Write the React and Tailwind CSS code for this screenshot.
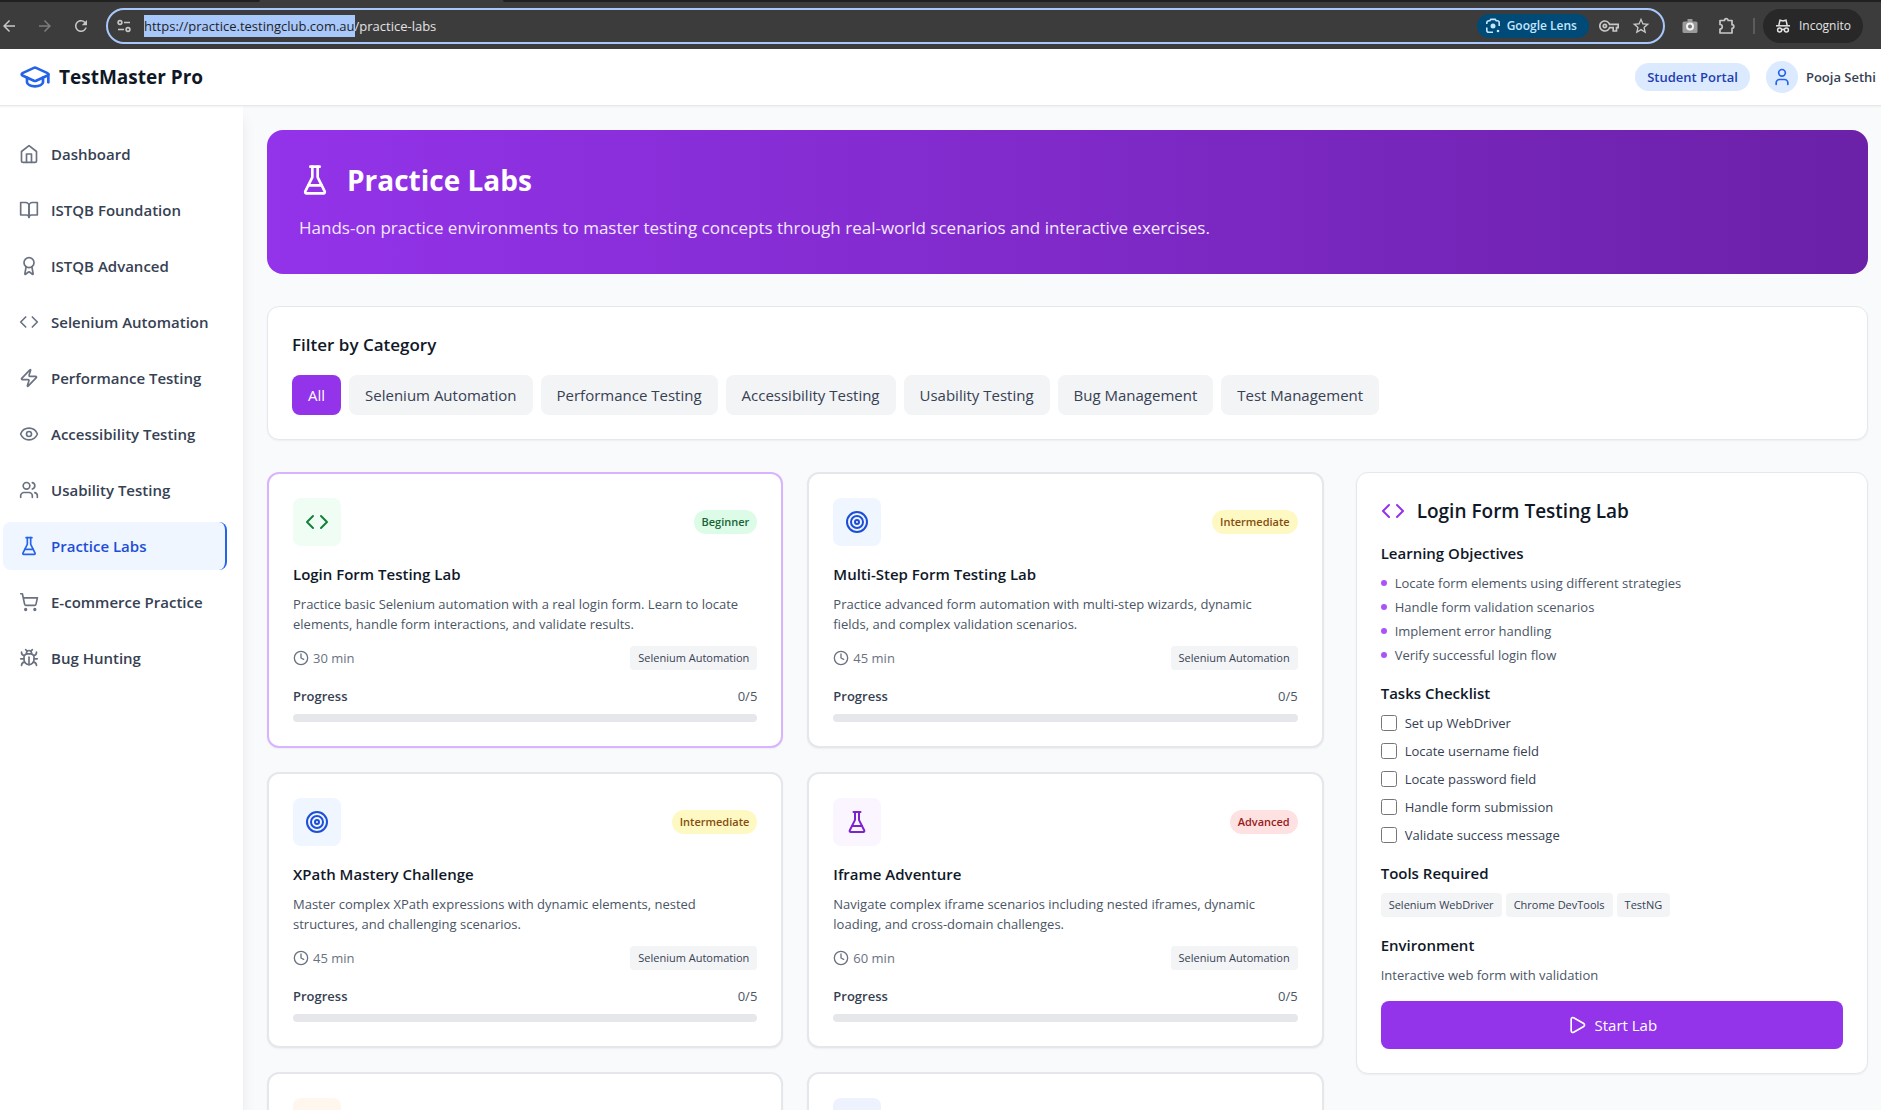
import React, { useEffect, useRef } from "react";
import {
  GraduationCap, User, Code, Zap, Eye, Users, ShoppingCart, Bug, Target, Clock, Play, Award,
} from "lucide-react";
import { MdArrowBack, MdArrowForward, MdRefresh, MdStarBorder, MdOutlineVpnKey } from "react-icons/md";

function Stroke({ className, children }) {
  return (
    <svg className={className} viewBox="0 0 24 24" fill="none" stroke="currentColor" strokeWidth="2" strokeLinecap="round" strokeLinejoin="round" aria-hidden="true">
      {children}
    </svg>
  );
}

function Flask({ className }) {
  return (
    <Stroke className={className}>
      <path d="M10 2v7.527a2 2 0 0 1-.211.896L4.72 20.55a1 1 0 0 0 .9 1.45h12.76a1 1 0 0 0 .9-1.45l-5.069-10.127A2 2 0 0 1 14 9.527V2" />
      <path d="M8.5 2h7" />
      <path d="M7 16h10" />
    </Stroke>
  );
}

function Book({ className }) {
  return (
    <Stroke className={className}>
      <path d="M2 3h6a4 4 0 0 1 4 4v14a3 3 0 0 0-3-3H2z" />
      <path d="M22 3h-6a4 4 0 0 0-4 4v14a3 3 0 0 1 3-3h7z" />
    </Stroke>
  );
}

function HomeIcon({ className }) {
  return (
    <Stroke className={className}>
      <path d="m3 9 9-7 9 7v11a2 2 0 0 1-2 2H5a2 2 0 0 1-2-2z" />
      <path d="M9 22V12h6v10" />
    </Stroke>
  );
}

function Tune() {
  return (
    <svg className="size-4 shrink-0" viewBox="0 0 16 16" fill="none" stroke="currentColor" strokeWidth="1.6" aria-hidden="true">
      <circle cx="4" cy="4.5" r="1.9" />
      <path d="M8 4.5h6M2 11.5h6" />
      <circle cx="12" cy="11.5" r="1.9" />
    </svg>
  );
}

function Lens() {
  return (
    <svg className="size-4 shrink-0" viewBox="0 0 16 16" fill="none" stroke="currentColor" strokeWidth="1.6" aria-hidden="true">
      <path d="M1.8 6V4.8a2 2 0 0 1 2-2h1l1-1.4h4.4l1 1.4h1a2 2 0 0 1 2 2V8M1.8 9.5v2.7a2 2 0 0 0 2 2H8" />
      <circle cx="8" cy="8" r="2.5" fill="currentColor" stroke="none" />
      <circle cx="13" cy="13" r="1.3" fill="currentColor" stroke="none" />
    </svg>
  );
}

function Spy() {
  return (
    <svg className="size-4 shrink-0" viewBox="0 0 16 16" fill="none" stroke="currentColor" strokeWidth="1.5" aria-hidden="true">
      <path d="M1 7.8h14" />
      <path d="M3.8 7.5 5 2.2l3 .8 3-.8 1.2 5.3" />
      <circle cx="4.6" cy="12" r="2" />
      <circle cx="11.4" cy="12" r="2" />
      <path d="M6.6 11.8c.8-.6 2-.6 2.8 0" />
    </svg>
  );
}

function Camera() {
  return (
    <svg className="size-[18px]" viewBox="0 0 18 18" aria-hidden="true">
      <path d="M6.5 2h5v2.5H15A1.5 1.5 0 0 1 16.5 6v8.500A1.5 1.5 0 0 1 15 16H3a1.5 1.5 0 0 1-1.5-1.5V6A1.5 1.5 0 0 1 3 4.5h3.5z" fill="#9a9a9a" />
      <circle cx="9" cy="9.5" r="3" fill="#777" stroke="#f3f3f3" strokeWidth="2" />
    </svg>
  );
}

function Puzzle() {
  return (
    <svg className="size-5" viewBox="0 0 20 20" fill="none" stroke="currentColor" strokeWidth="1.7" strokeLinejoin="round" aria-hidden="true">
      <path d="M3 4.5h4.500a1.8 1.8 0 0 1 3.6 0H15v4.200a1.8 1.8 0 0 1 0 3.6V17H3v-4a2.2 2.2 0 0 0 0-4.500z" />
    </svg>
  );
}

function BrowserBar() {
  const url = useRef(null);
  useEffect(() => {
    url.current.focus();
    url.current.setSelectionRange(0, "https://practice.testingclub.com.au".length);
  }, []);
  return (
    <div className="shrink-0 bg-[#3c3c3c] text-[#c7c7c7]">
      <div className="flex h-[2px]">
        <div className="w-[260px] rounded-br-sm bg-[#202020]" />
        <div className="w-[243px]" />
        <div className="flex-1 rounded-bl-sm bg-[#202020]" />
      </div>
      <div className="flex h-[47px] items-center pr-[18px]">
        <button aria-label="Back" className="w-[18px]"><MdArrowBack className="size-[18px]" /></button>
        <button aria-label="Forward" className="ml-[18px] w-[18px] text-[#7c7c7c]"><MdArrowForward className="size-[18px]" /></button>
        <button aria-label="Reload" className="ml-[18px] w-[18px]"><MdRefresh className="size-[18px]" /></button>
        <div className="ml-4 flex h-9 flex-1 items-center rounded-full border-2 border-[#a8c7fa] pr-3 pl-2">
          <Tune />
          <input
            ref={url}
            aria-label="Address"
            defaultValue="https://practice.testingclub.com.au/practice-labs"
            className="ml-3 h-[22px] min-w-0 flex-1 bg-transparent text-[13px] leading-[22px] text-[#e3e3e3] outline-none selection:bg-[#a8c7fa] selection:text-[#1f1f1f]"
          />
          <button className="flex h-6 items-center gap-[6px] rounded-full bg-[#004a77] pr-3 pl-2 text-[12px] font-semibold text-[#c2e7ff]">
            <Lens />Google Lens
          </button>
          <button aria-label="Passwords" className="ml-[10px]"><MdOutlineVpnKey className="size-5" /></button>
          <button aria-label="Bookmark" className="ml-3"><MdStarBorder className="size-5" /></button>
        </div>
        <button aria-label="Camera" className="ml-4"><Camera /></button>
        <button aria-label="Extensions" className="ml-[18px]"><Puzzle /></button>
        <div className="ml-4 h-4 w-[2px] bg-[#5c5c5c]" />
        <button className="ml-2 flex h-[34px] items-center gap-2 rounded-full bg-[#282828] px-3 text-[12px] text-[#e3e3e3]">
          <Spy />Incognito
        </button>
      </div>
    </div>
  );
}

const nav = [
  [HomeIcon, "Dashboard"],
  [Book, "ISTQB Foundation"],
  [Award, "ISTQB Advanced"],
  [Code, "Selenium Automation"],
  [Zap, "Performance Testing"],
  [Eye, "Accessibility Testing"],
  [Users, "Usability Testing"],
  [Flask, "Practice Labs"],
  [ShoppingCart, "E-commerce Practice"],
  [Bug, "Bug Hunting"],
];

const filters = ["All", "Selenium Automation", "Performance Testing", "Accessibility Testing", "Usability Testing", "Bug Management", "Test Management"];

const levels = {
  Beginner: "bg-[#dcfce7] text-[#166534]",
  Intermediate: "bg-[#fef9c3] text-[#854d0e]",
  Advanced: "bg-[#fee2e2] text-[#991b1b]",
};

const labs = [
  { icon: Code, tone: "bg-[#f0fdf4] text-[#15803d]", level: "Beginner", title: "Login Form Testing Lab", text: "Practice basic Selenium automation with a real login form. Learn to locate elements, handle form interactions, and validate results.", time: "30 min", selected: true },
  { icon: Target, tone: "bg-[#eff6ff] text-[#1d4ed8]", level: "Intermediate", title: "Multi-Step Form Testing Lab", text: "Practice advanced form automation with multi-step wizards, dynamic fields, and complex validation scenarios.", time: "45 min" },
  { icon: Target, tone: "bg-[#eff6ff] text-[#1d4ed8]", level: "Intermediate", title: "XPath Mastery Challenge", text: "Master complex XPath expressions with dynamic elements, nested structures, and challenging scenarios.", time: "45 min" },
  { icon: Flask, tone: "bg-[#faf5ff] text-[#7e22ce]", level: "Advanced", title: "Iframe Adventure", text: "Navigate complex iframe scenarios including nested iframes, dynamic loading, and cross-domain challenges.", time: "60 min" },
];

function LabCard({ lab }) {
  const Icon = lab.icon;
  return (
    <article className={`rounded-xl border-2 bg-white p-6 shadow-xs ${lab.selected ? "border-[#d8b4fe]" : "border-gray-200"}`}>
      <div className="mb-4 flex items-center justify-between">
        <div className={`rounded-lg p-3 ${lab.tone}`}><Icon className="size-6" /></div>
        <span className={`rounded-full px-2 py-1 text-[11px] leading-4 font-semibold ${levels[lab.level]}`}>{lab.level}</span>
      </div>
      <h3 className="mb-2 text-[15px] leading-6 font-semibold text-gray-900">{lab.title}</h3>
      <p className="mb-3 pr-3 text-[13px] leading-5 text-gray-600">{lab.text}</p>
      <div className="mb-4 flex items-center justify-between">
        <span className="flex items-center gap-1 text-[13px] leading-5 text-gray-500"><Clock className="size-4" />{lab.time}</span>
        <span className="rounded bg-gray-100 px-2 py-1 text-[11px] leading-4 text-gray-700">Selenium Automation</span>
      </div>
      <div className="mb-2 flex justify-between text-[13px] leading-5">
        <span className="font-semibold text-gray-700">Progress</span>
        <span className="text-gray-600">0/5</span>
      </div>
      <div className="h-2 rounded-full bg-gray-200" />
    </article>
  );
}

function Section({ title, children }) {
  return (
    <section className="mt-4">
      <h4 className="mb-2 text-[15px] leading-6 font-semibold text-gray-900">{title}</h4>
      {children}
    </section>
  );
}

const objectives = ["Locate form elements using different strategies", "Handle form validation scenarios", "Implement error handling", "Verify successful login flow"];
const tasks = ["Set up WebDriver", "Locate username field", "Locate password field", "Handle form submission", "Validate success message"];
const tools = ["Selenium WebDriver", "Chrome DevTools", "TestNG"];

export default function App() {
  return (
    <div className="flex h-screen flex-col overflow-hidden bg-gray-50 font-['Open_Sans','Noto_Sans',sans-serif]">
      <BrowserBar />
      <header className="z-10 flex h-[57px] shrink-0 items-center justify-between border-b border-gray-200 bg-white pr-[5px] pl-[19px] shadow-xs">
        <div className="flex items-center gap-2">
          <GraduationCap className="size-8 text-[#2563eb]" />
          <span className="text-[19px] leading-7 font-bold text-gray-900">TestMaster Pro</span>
        </div>
        <div className="flex items-center gap-4">
          <span className="rounded-full bg-[#dbeafe] px-3 py-1 text-[13px] leading-5 font-semibold text-[#1e40af]">Student Portal</span>
          <div className="flex items-center gap-2">
            <div className="flex size-8 items-center justify-center rounded-full bg-[#dbeafe]"><User className="size-5 text-[#2563eb]" /></div>
            <span className="text-[13px] leading-5 font-semibold text-gray-700">Pooja Sethi</span>
          </div>
        </div>
      </header>
      <div className="flex min-h-0 flex-1">
        <nav className="flex w-[243px] shrink-0 flex-col gap-2 bg-white pt-6 pr-4 pl-[3px] shadow-lg">
          {nav.map(([Icon, label]) => (
            <a key={label} href="#" className={`flex items-center gap-3 rounded-lg px-4 py-3 text-[15px] leading-6 font-semibold ${label === "Practice Labs" ? "border-r-2 border-[#2563eb] bg-[#eff6ff] text-[#1d4ed8]" : "text-gray-700"}`}>
              <Icon className={`size-5 ${label === "Practice Labs" ? "text-[#2563eb]" : "text-gray-500"}`} />
              {label}
            </a>
          ))}
        </nav>
        <main className="min-w-0 flex-1 overflow-hidden pt-6 pr-[13px] pl-6">
          <div className="mb-8 rounded-2xl bg-linear-to-r/srgb from-[#9333ea] to-[#6b21a8] p-8">
            <div className="mb-4 flex items-center gap-4 text-white">
              <Flask className="size-8" />
              <h1 className="text-[28px] leading-9 font-bold">Practice Labs</h1>
            </div>
            <p className="text-[17px] leading-7 text-[#f3e8ff]">Hands-on practice environments to master testing concepts through real-world scenarios and interactive exercises.</p>
          </div>
          <div className="mb-8 rounded-xl border border-gray-200 bg-white p-6 shadow-xs">
            <h2 className="mb-4 text-[17px] leading-7 font-semibold text-gray-900">Filter by Category</h2>
            <div className="flex flex-wrap gap-2">
              {filters.map((f) => (
                <button key={f} className={`rounded-lg px-4 py-2 text-[15px] leading-6 ${f === "All" ? "bg-[#9333ea] text-white" : "bg-gray-100 text-gray-700"}`}>{f}</button>
              ))}
            </div>
          </div>
          <div className="grid grid-cols-3 items-start gap-8">
            <div className="col-span-2 grid grid-cols-2 gap-6">
              {labs.map((lab) => <LabCard key={lab.title} lab={lab} />)}
              {["bg-[#fff7ed]", "bg-[#eef2ff]"].map((tone) => (
                <div key={tone} className="h-[276px] rounded-xl border-2 border-gray-200 bg-white p-6 shadow-xs">
                  <div className={`size-12 rounded-lg ${tone}`} />
                </div>
              ))}
            </div>
            <aside className="rounded-xl border border-gray-200 bg-white p-6 shadow-xs">
              <div className="flex items-center gap-3">
                <Code className="size-6 text-[#9333ea]" />
                <h3 className="text-[19px] leading-7 font-semibold text-gray-900">Login Form Testing Lab</h3>
              </div>
              <Section title="Learning Objectives">
                <ul className="flex flex-col gap-1">
                  {objectives.map((o) => (
                    <li key={o} className="flex items-center gap-2 text-[13px] leading-5 text-gray-600"><span className="size-[6px] rounded-full bg-[#a855f7]" />{o}</li>
                  ))}
                </ul>
              </Section>
              <Section title="Tasks Checklist">
                <div className="flex flex-col gap-2">
                  {tasks.map((t) => (
                    <label key={t} className="flex items-center gap-2 text-[13px] leading-5 text-gray-700"><input type="checkbox" className="size-4" />{t}</label>
                  ))}
                </div>
              </Section>
              <Section title="Tools Required">
                <div className="flex flex-wrap gap-1">
                  {tools.map((t) => <span key={t} className="rounded bg-gray-100 px-2 py-1 text-[11px] leading-4 text-gray-700">{t}</span>)}
                </div>
              </Section>
              <Section title="Environment">
                <p className="text-[13px] leading-5 text-gray-600">Interactive web form with validation</p>
              </Section>
              <button className="mt-4 flex w-full items-center justify-center gap-2 rounded-lg bg-[#9333ea] py-3 text-[15px] leading-6 font-medium text-white"><Play className="size-5" />Start Lab</button>
            </aside>
          </div>
        </main>
      </div>
    </div>
  );
}
